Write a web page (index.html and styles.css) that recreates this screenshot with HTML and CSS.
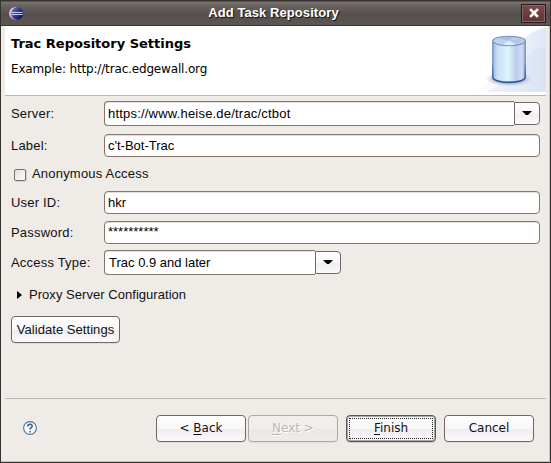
FILE: index.html
```html
<!DOCTYPE html>
<html lang="en">
<head>
<meta charset="utf-8">
<title>Add Task Repository</title>
<link rel="stylesheet" href="styles.css">
</head>
<body>
<div class="window">
  <header class="titlebar">
    <svg class="logo" width="16" height="14" viewBox="0 0 16 14">
      <defs><linearGradient id="orb" x1="0" x2="1" y1="0" y2=".6"><stop offset="0" stop-color="#8078bd"/><stop offset=".5" stop-color="#40409a"/><stop offset="1" stop-color="#10105c"/></linearGradient>
      <linearGradient id="moon" x1="0" x2="0" y1="0" y2="1"><stop offset="0" stop-color="#eee0e8"/><stop offset="1" stop-color="#c48fa5"/></linearGradient></defs>
      <ellipse cx="6.2" cy="6.5" rx="6.2" ry="6.2" fill="url(#moon)"/>
      <ellipse cx="8.2" cy="6.5" rx="6" ry="6.2" fill="url(#orb)"/>
      <path d="M2.5 5.5h11.2M2.5 7.5h11.2" stroke="#bfcaff" stroke-width="1"/>
    </svg>
    <h1 class="title">Add Task Repository</h1>
    <button class="close"><svg width="10" height="10" viewBox="0 0 10 10"><path d="M2 2l6 6M8 2l-6 6" stroke="#fff" stroke-width="2.5" stroke-linecap="square"/></svg></button>
  </header>
  <section class="banner">
    <div class="intro">
      <h2>Trac Repository Settings</h2>
      <p>Example: http://trac.edgewall.org</p>
    </div>
    <svg class="cylinder" width="74" height="66" viewBox="0 0 74 66">
      <defs>
        <linearGradient id="sky" x1="0" y1="0" x2="1" y2="0"><stop offset="0" stop-color="#fff"/><stop offset=".4" stop-color="#f4f7fd"/><stop offset="1" stop-color="#dfe7f8"/></linearGradient>
        <linearGradient id="side" x1="0" x2="1"><stop offset="0" stop-color="#9ebce3"/><stop offset=".15" stop-color="#cae0f2"/><stop offset=".48" stop-color="#dcf7fd"/><stop offset=".72" stop-color="#bccdec"/><stop offset=".9" stop-color="#d2daf5"/><stop offset="1" stop-color="#9cb2dd"/></linearGradient>
        <linearGradient id="rim" x1="0" y1="0" x2="0" y2="1"><stop offset="0" stop-color="#8199c5"/><stop offset=".5" stop-color="#7997cf"/><stop offset="1" stop-color="#1e4da0"/></linearGradient>
        <radialGradient id="shade"><stop offset=".6" stop-color="#9b94b0" stop-opacity=".65"/><stop offset="1" stop-color="#ccbfd0" stop-opacity="0"/></radialGradient>
      </defs>
      <path d="M0 66C31 53 36 11 74 1V66Z" fill="url(#sky)"/>
      <path d="M14 66C38 58 48 27 74 20V66Z" fill="#cbd9f1" opacity=".25"/>
      <ellipse cx="37" cy="53" rx="24" ry="7.5" fill="url(#shade)"/>
      <path d="M20.8 15V51C20.8 58 53.2 58 53.2 51V15Z" fill="url(#side)" stroke="url(#rim)" stroke-width="1.5"/>
      <ellipse cx="37" cy="15" rx="16.2" ry="4.6" fill="#bed2ed" stroke="#8198c5" stroke-width="1.3"/>
      <path d="M37 15L26 12Q33 10.5 42 11.2Z" fill="#a7bde3"/>
      <path d="M37 15L49 12.5Q53 15 46 17.5Z" fill="#b4c5e5"/>
      <path d="M37 14.5L31 18.6Q37 19.8 43 18.6Z" fill="#def0fb"/>
    </svg>
  </section>
  <main class="form">
    <div class="row server"><label>Server:</label><div class="combo"><span class="value wide">https://www.heise.de/trac/ctbot</span><span class="drop"><svg width="10" height="5" viewBox="0 0 10 5"><path d="M0 0H10L6 4H4Z"/></svg></span></div></div>
    <div class="row name"><label>Label:</label><div class="field">c't-Bot-Trac</div></div>
    <div class="anon"><span class="box"></span><label>Anonymous Access</label></div>
    <div class="row user"><label>User ID:</label><div class="field">hkr</div></div>
    <div class="row pass"><label>Password:</label><div class="field secret">**********</div></div>
    <div class="row access"><label>Access Type:</label><div class="combo short"><span class="value">Trac 0.9 and later</span><span class="drop"><svg width="10" height="5" viewBox="0 0 10 5"><path d="M0 0H10L6 4H4Z"/></svg></span></div></div>
    <div class="proxy"><svg width="5" height="8" viewBox="0 0 5 8"><path d="M0 0L5 4L0 8Z"/></svg><span>Proxy Server Configuration</span></div>
    <button class="button validate">Validate Settings</button>
  </main>
  <footer class="footer">
    <svg class="help" width="14" height="14" viewBox="0 0 14 14"><circle cx="7" cy="7" r="6.4" fill="#f8fafb" stroke="#547297" stroke-width="1.1"/><path d="M4.8 5.5C4.8 2.5 9.2 2.5 9.2 5.1C9.2 6.8 7 6.5 7 8.6M7 10v1.5" fill="none" stroke="#385a85" stroke-width="1.5"/></svg>
    <button class="button nav">&lt; <u>B</u>ack</button>
    <button class="button nav disabled"><u>N</u>ext &gt;</button>
    <button class="button nav default"><span class="focus"><u>F</u>inish</span></button>
    <button class="button nav cancel">Cancel</button>
  </footer>
</div>
</body>
</html>
```
FILE: styles.css
```css
* { box-sizing: border-box; }
body { margin: 0; font: 13px/16px "Liberation Sans", sans-serif; color: #111; }
h1, h2, p { margin: 0; }
button { font: inherit; color: inherit; padding: 0; }
.window { width: 551px; height: 463px; background: #efebe7; border: 1px solid #373130; overflow: hidden; display: flex; flex-direction: column; box-shadow: inset -1px -1px #c9c2bd; }
.titlebar { height: 25px; flex: none; display: flex; align-items: center; padding: 0 4px 0 8px; background: linear-gradient(#4a4441 0, #78706c 6%, #6a6460 18%, #55504d 55%, #5b5653 95%); border-bottom: 1px solid #3a3533; }
.logo { margin-top: 2px; }
.title { flex: 1; text-align: center; font-size: 13px; letter-spacing: .07px; color: #fff; text-shadow: 1px 1px 1px #111; padding-left: 1px; }
.close { width: 25px; height: 19px; background: linear-gradient(#794c4b, #613332); border: 1px solid #251b1b; outline: 0; box-shadow: inset 0 0 0 1px #8a6362; display: grid; place-items: center; }
.banner { height: 70px; flex: none; margin: 0 4px; background: #fff; border-bottom: 1px solid #bbb7b4; display: flex; justify-content: space-between; color: #000; font-family: "DejaVu Sans", sans-serif; }
.intro { padding: 10px 0 0 6px; white-space: nowrap; }
h2 { font-size: 13px; line-height: 16px; }
.intro p { font-size: 12px; line-height: 16px; margin-top: 9px; letter-spacing: -.16px; }
.form { height: 303px; flex: none; margin: 0 4px; padding: 5px 6px 0; border-bottom: 1px solid #bbb7b4; display: flex; flex-direction: column; align-items: flex-start; }
.row { display: flex; align-items: center; width: 529px; height: 23px; }
.row > label { width: 93px; flex: none; white-space: nowrap; letter-spacing: .2px; padding-top: 1px; }
.field { flex: 1; height: 23px; padding: 3px 4px 2px 3px; background: #fff; border: 1px solid #83766c; border-radius: 4px; box-shadow: inset 0 1px #e2dfdc; color: #000; }
.secret { padding-top: 2px; }
.combo { display: flex; align-items: center; width: 436px; height: 25px; }
.combo.short { width: 237px; }
.value { flex: 1; height: 25px; padding: 4px; background: #fff; border: 1px solid #83766c; border-right: 0; border-radius: 4px 0 0 4px; box-shadow: inset 0 1px #e2dfdc; color: #000; }
.wide { letter-spacing: .2px; padding-left: 3px; }
.drop { width: 26px; height: 23px; display: grid; place-items: center; background: linear-gradient(#fff 0, #f8f6f8 50%, #efecef 51%, #fbfafb); border: 1px solid #756466; border-radius: 0 4px 4px 0; }
.server, .access { height: 25px; }
.name { margin-top: 8px; }
.anon { display: flex; align-items: center; height: 16px; margin-top: 9px; padding-left: 3px; letter-spacing: .2px; }
.box { width: 12px; height: 12px; margin: 2px 6px 0 0; background: linear-gradient(135deg, #dedede, #fff); border: 1px solid #76706b; border-radius: 2px; box-shadow: 1px 1px #d3cfcb; }
.user { margin-top: 9px; }
.pass { margin-top: 7px; }
.access { margin-top: 6px; }
.proxy { display: flex; align-items: center; gap: 7px; height: 16px; margin: 12px 0 0 6px; letter-spacing: .04px; }
.button { height: 27px; border: 1px solid #756466; border-radius: 4px; background: linear-gradient(#fff 0, #f9f7f9 50%, #efecef 51%, #faf9fa); box-shadow: 0 1px #e1dcd8; flex: none; }
.validate { width: 109px; margin-top: 13px; letter-spacing: .05px; }
.footer { height: 60px; display: flex; align-items: center; padding: 0 0 1px 22px; font-family: "DejaVu Sans", sans-serif; font-size: 12px; }
.help { margin: -2px 119px 0 0; flex: none; }
.nav { width: 90px; margin-right: 2px; padding-bottom: 2px; }
.disabled { color: #bdb8b2; text-shadow: 1px 1px #fff; border-color: #b7a6a6; background: linear-gradient(#f1eeeb 50%, #ebe7e4 51%, #efebe7); margin-right: 8px; }
.default { border-color: #555; box-shadow: inset 0 0 0 1px #aaa, 0 1px #d1ccc8; padding: 2px; margin-right: 8px; }
.focus { display: block; height: 21px; border: 1px dotted #222; line-height: 18px; }
u { text-underline-offset: 2px; }
```
